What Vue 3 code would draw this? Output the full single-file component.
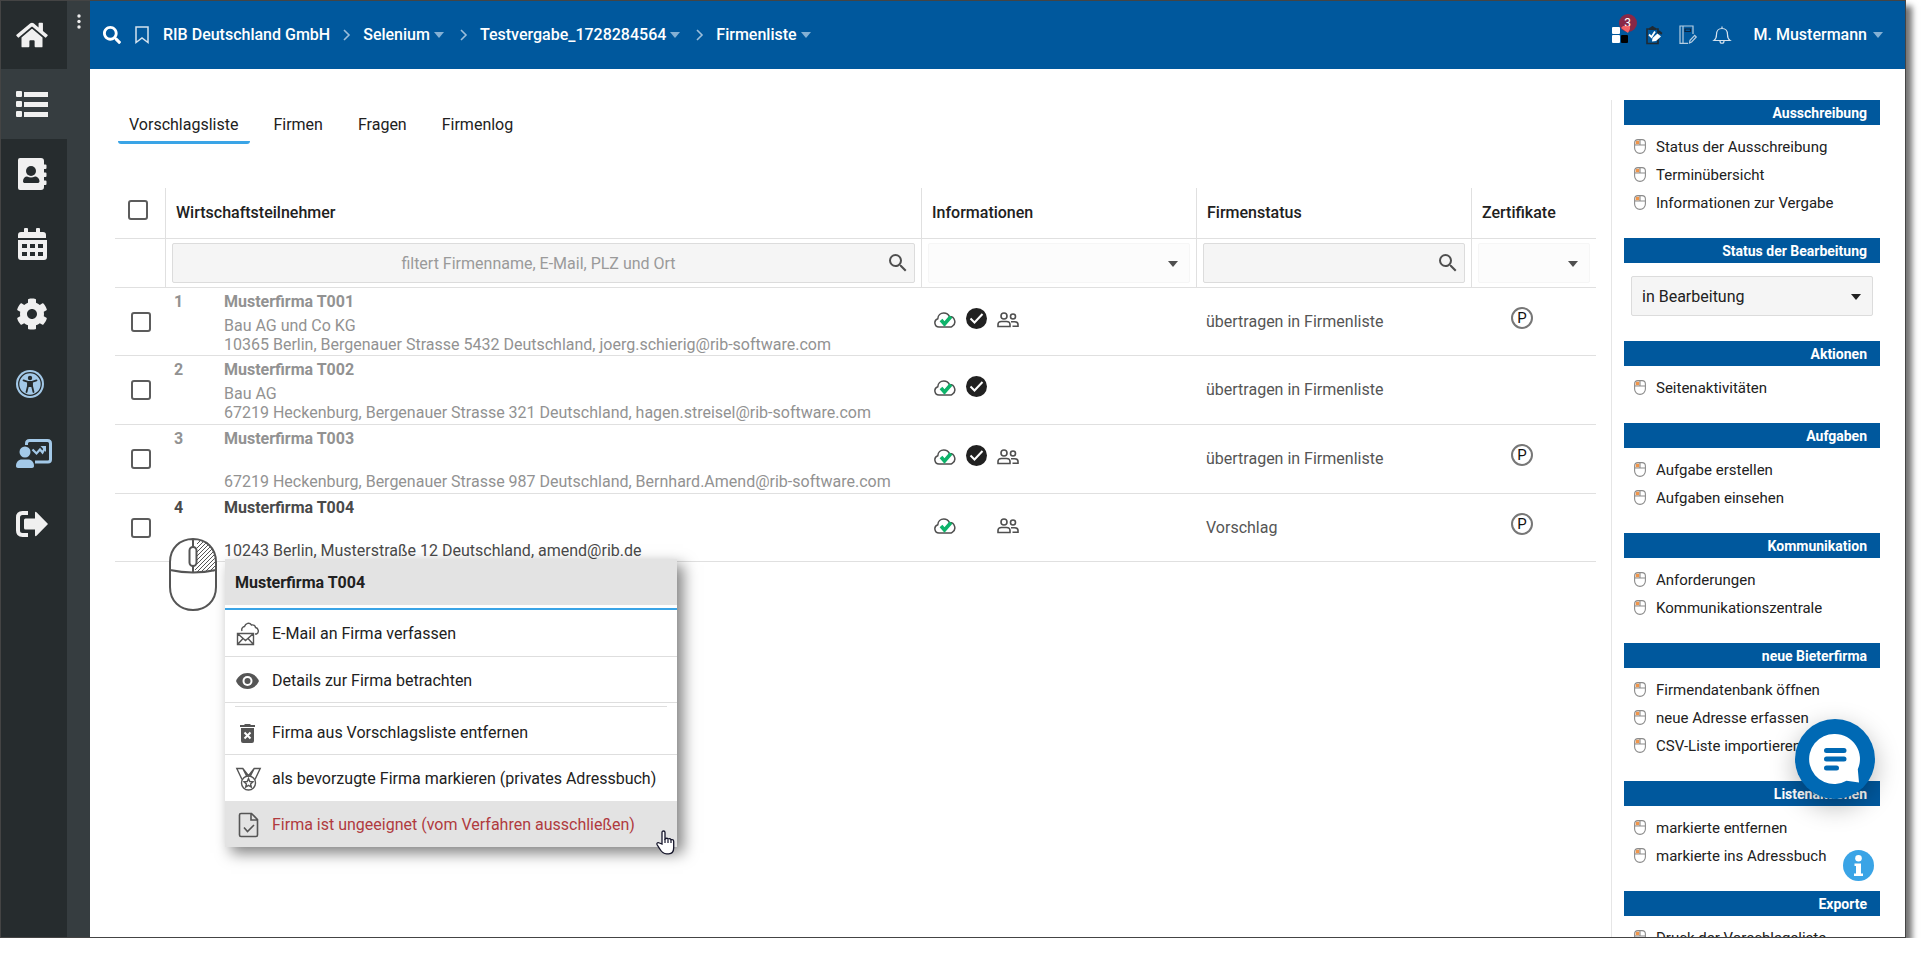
<script setup>
import { ref } from 'vue'

const crumbs = [
  { label: 'RIB Deutschland GmbH', menu: false },
  { label: 'Selenium', menu: true },
  { label: 'Testvergabe_1728284564', menu: true },
  { label: 'Firmenliste', menu: true },
]

const tabs = ['Vorschlagsliste', 'Firmen', 'Fragen', 'Firmenlog']
const activeTab = ref('Vorschlagsliste')

const companies = [
  { nr: 1, name: 'Musterfirma T001', extra: 'Bau AG und Co KG', address: '10365 Berlin, Bergenauer Strasse 5432 Deutschland, joerg.schierig@rib-software.com', checked: true, people: true, status: 'übertragen in Firmenliste', cert: true, muted: true },
  { nr: 2, name: 'Musterfirma T002', extra: 'Bau AG', address: '67219 Heckenburg, Bergenauer Strasse 321 Deutschland, hagen.streisel@rib-software.com', checked: true, people: false, status: 'übertragen in Firmenliste', cert: false, muted: true },
  { nr: 3, name: 'Musterfirma T003', extra: '', address: '67219 Heckenburg, Bergenauer Strasse 987 Deutschland, Bernhard.Amend@rib-software.com', checked: true, people: true, status: 'übertragen in Firmenliste', cert: true, muted: true },
  { nr: 4, name: 'Musterfirma T004', extra: '', address: '10243 Berlin, Musterstraße 12 Deutschland, amend@rib.de', checked: false, people: true, status: 'Vorschlag', cert: true, muted: false },
]

const panels = [
  { title: 'Ausschreibung', links: ['Status der Ausschreibung', 'Terminübersicht', 'Informationen zur Vergabe'] },
  { title: 'Status der Bearbeitung', select: true, links: [] },
  { title: 'Aktionen', links: ['Seitenaktivitäten'] },
  { title: 'Aufgaben', links: ['Aufgabe erstellen', 'Aufgaben einsehen'] },
  { title: 'Kommunikation', links: ['Anforderungen', 'Kommunikationszentrale'] },
  { title: 'neue Bieterfirma', links: ['Firmendatenbank öffnen', 'neue Adresse erfassen', 'CSV-Liste importieren'] },
  { title: 'Listenaktionen', links: ['markierte entfernen', 'markierte ins Adressbuch'] },
  { title: 'Exporte', links: ['Druck der Vorschlagsliste'] },
]
</script>

<template>
  <div class="window">
    <svg class="sprite" aria-hidden="true">
      <symbol id="caret" viewBox="0 0 10 6"><path d="M0 0h10L5 6z" fill="currentColor" /></symbol>
      <symbol id="lens" viewBox="0 0 24 24"><path fill="currentColor" d="M15.500 14h-.79l-.28-.27A6.471 6.471 0 0 0 16 9.500 6.500 6.500 0 1 0 9.500 16c1.610 0 3.090-.59 4.230-1.570l.27.28v.79l5 4.990L20.490 19l-4.990-5zm-6 0C7.010 14 5 11.990 5 9.500S7.010 5 9.500 5 14 7.010 14 9.500 11.990 14 9.500 14z" /></symbol>
      <symbol id="click" viewBox="0 0 12 15">
        <path d="M1 6V4a3 3 0 0 1 3-3h2v5z" fill="#fbdcc0" />
        <rect x="2" y="2" width="3" height="3" fill="#f0954a" />
        <path d="M.6 4q0-3.400 3.400-3.400h4q3.400 0 3.400 3.400v5a5.400 5.400 0 0 1-10.800 0zM.6 6h10.800M6 .6V6" stroke="#8b8b8b" stroke-width="1.100" fill="none" />
      </symbol>
      <symbol id="cloud" viewBox="0 0 22 16">
        <path d="M5 15a4.200 4.200 0 0 1-1.200-8.200C4 3.200 6.600 1 9.800 1c2.600 0 4.600 1.300 5.600 3.600a5.200 5.200 0 0 1 2.800 9.700c-.7.500-1.300.7-2.200.7z" fill="none" stroke="#4f4f4f" stroke-width="1.500" />
        <path d="M7 8l3.500 4 6.500-7.500" fill="none" stroke="#0eb36a" stroke-width="3.600" />
      </symbol>
      <symbol id="done" viewBox="0 0 21 21">
        <circle cx="10.500" cy="10.500" r="10.500" fill="#212121" />
        <path d="M4.500 10.500l4 4L16.500 6" fill="none" stroke="#fff" stroke-width="2" />
      </symbol>
      <symbol id="people" viewBox="0 0 22 16">
        <g fill="none" stroke="#4f4f4f" stroke-width="1.600">
          <circle cx="7" cy="4" r="3" />
          <circle cx="16" cy="4.500" r="2.500" />
          <path d="M1 14.500v-2c0-2 1.500-3 3.500-3h5c2 0 3.500 1 3.500 3v2zM14 9.700h3.500c2 0 3.500 1 3.500 2.800v1.700h-5.500" />
        </g>
      </symbol>
    </svg>

    <nav class="sidebar" aria-label="Hauptnavigation">
      <a href="#" aria-label="Startseite">
        <svg width="32" height="28" viewBox="0 0 576 512"><path fill="currentColor" d="M280.370 148.260L96 300.110V464a16 16 0 0 0 16 16l112.060-.29a16 16 0 0 0 15.920-16V368a16 16 0 0 1 16-16h64a16 16 0 0 1 16 16v95.640a16 16 0 0 0 16 16.050L464 480a16 16 0 0 0 16-16V300L295.670 148.260a12.190 12.190 0 0 0-15.300 0zM571.600 251.470L488 182.560V44.050a12 12 0 0 0-12-12h-56a12 12 0 0 0-12 12v72.610L318.470 43a48 48 0 0 0-61 0L4.340 251.470a12 12 0 0 0-1.600 16.900l25.500 31A12 12 0 0 0 45.150 301l235.220-193.740a12.190 12.190 0 0 1 15.300 0L530.900 301a12 12 0 0 0 16.900-1.600l25.500-31a12 12 0 0 0-1.700-16.930z" /></svg>
      </a>
      <a href="#" class="active" aria-label="Listen">
        <svg width="32" height="27" viewBox="0 0 32 27" fill="currentColor"><rect width="6" height="6" rx="1" /><rect y="10" width="6" height="6" rx="1" /><rect y="20" width="6" height="6" rx="1" /><path d="M8 1h24v5H8zM8 11h24v5H8zM8 21h24v5H8z" /></svg>
      </a>
      <a href="#" aria-label="Adressbuch">
        <svg width="32" height="32" viewBox="0 0 32 32"><path fill="currentColor" d="M4 0h21a3 3 0 0 1 3 3v3.500h1.500a1 1 0 0 1 1 1V10a1 1 0 0 1-1 1H28v3.500h1.500a1 1 0 0 1 1 1V18a1 1 0 0 1-1 1H28v3.500h1.500a1 1 0 0 1 1 1V26a1 1 0 0 1-1 1H28v2a3 3 0 0 1-3 3H4a2 2 0 0 1-2-2V2a2 2 0 0 1 2-2z" /><circle cx="15" cy="13" r="5" fill="#262c2e" /><path d="M9 25c-1.300 0-2-.7-2-1.800C7 20.200 9 18.500 11 18.500c3 1.200 5 1.200 8 0 2 0 4.500 1.700 4.500 4.700 0 1.100-.8 1.800-2 1.800z" fill="#262c2e" /></svg>
      </a>
      <a href="#" aria-label="Kalender">
        <svg width="32" height="32" viewBox="0 0 32 32"><path fill="currentColor" d="M2 10V7a3 3 0 0 1 3-3h3V1q0-1 1-1h2q1 0 1 1v3h8V1q0-1 1-1h2q1 0 1 1v3h3a3 3 0 0 1 3 3v3zM2 12h29v17a3 3 0 0 1-3 3H5a3 3 0 0 1-3-3z" /><path fill="#262c2e" d="M6 16h5v4H6zM14 16h5v4h-5zM22 16h5v4h-5zM6 24h5v4H6zM14 24h5v4h-5zM22 24h5v4h-5z" /></svg>
      </a>
      <a href="#" aria-label="Einstellungen">
        <svg width="32" height="32" viewBox="0 0 512 512"><path fill="currentColor" d="M487.400 315.700l-42.600-24.600c4.300-23.200 4.300-47 0-70.200l42.600-24.600c4.900-2.800 7.100-8.600 5.500-14-11.100-35.600-30-67.800-54.700-94.600-3.800-4.100-10-5.100-14.800-2.300L380.800 110c-17.900-15.400-38.500-27.300-60.800-35.100V25.800c0-5.600-3.900-10.500-9.400-11.700-36.700-8.200-74.300-7.800-109.200 0-5.500 1.200-9.400 6.100-9.400 11.700V75c-22.200 7.900-42.800 19.800-60.800 35.100L88.700 85.500c-4.900-2.800-11-1.900-14.800 2.300-24.700 26.700-43.600 58.900-54.700 94.600-1.700 5.400.6 11.200 5.500 14L67.300 221c-4.300 23.200-4.300 47 0 70.200l-42.600 24.600c-4.900 2.800-7.100 8.600-5.500 14 11.100 35.600 30 67.800 54.700 94.600 3.800 4.100 10 5.100 14.800 2.300l42.600-24.600c17.900 15.400 38.500 27.300 60.800 35.100v49.200c0 5.600 3.900 10.500 9.400 11.700 36.700 8.200 74.300 7.800 109.200 0 5.500-1.200 9.400-6.100 9.400-11.700v-49.200c22.200-7.900 42.800-19.800 60.800-35.100l42.600 24.600c4.900 2.800 11 1.900 14.800-2.300 24.700-26.700 43.600-58.900 54.700-94.600 1.500-5.500-.7-11.300-5.600-14.100zM256 336c-44.100 0-80-35.900-80-80s35.900-80 80-80 80 35.900 80 80-35.900 80-80 80z" /></svg>
      </a>
      <a href="#" class="tint" aria-label="Barrierefreiheit">
        <svg width="28" height="28" viewBox="0 0 28 28"><circle cx="14" cy="14" r="14" fill="currentColor" /><circle cx="14" cy="14" r="11.300" fill="none" stroke="#262c2e" stroke-width="1.200" /><circle cx="14" cy="8" r="2.200" fill="#262c2e" /><path d="M7.500 10.300l4.500 1.500v4L10.500 22M20.500 10.300L16 11.800v4l1.500 6.200" fill="none" stroke="#262c2e" stroke-width="1.800" stroke-linecap="round" /><path d="M11.500 11h5v6h-5z" fill="#262c2e" /></svg>
      </a>
      <a href="#" class="tint" aria-label="Schulung">
        <svg width="36" height="30" viewBox="0 0 36 30"><g fill="currentColor"><circle cx="9" cy="13" r="5.500" /><path d="M0 27c0-4 2.500-6.500 6-6.500h6c3.500 0 6 2.500 6 6.500 0 1.200-.8 2-2 2H2c-1.200 0-2-.8-2-2z" /></g><path d="M10.500 6V4.500q0-3 3-3h18q3 0 3 3v16q0 2.500-2.500 2.500H19" fill="none" stroke="currentColor" stroke-width="3" /><path d="M16.500 10.500l4 4 3.500-4 2.500 3L29 9" fill="none" stroke="currentColor" stroke-width="2.200" /><path d="M24.500 7H30v6z" fill="currentColor" /></svg>
      </a>
      <a href="#" aria-label="Abmelden">
        <svg width="32" height="26" viewBox="0 0 32 26"><path d="M12 2H6.500Q2 2 2 6.500v13Q2 24 6.500 24H12" fill="none" stroke="currentColor" stroke-width="4" /><path fill="currentColor" d="M9.500 7.500H19V2q0-2 1.500-.8L32 13 20.500 24.800Q19 26 19 24v-5.500H9.500Q8 18.500 8 17V9q0-1.500 1.500-1.500z" /></svg>
      </a>
    </nav>

    <div class="rail">
      <button type="button" aria-label="Menü"><svg width="4" height="16" viewBox="0 0 4 16" fill="#eee"><circle cx="2" cy="2" r="1.700" /><circle cx="2" cy="7.500" r="1.700" /><circle cx="2" cy="13" r="1.700" /></svg></button>
    </div>

    <div class="content">
      <header class="topbar">
        <button type="button" aria-label="Suchen"><svg width="18" height="18" viewBox="0 0 512 512"><path fill="#fff" d="M505 442.700L405.300 343c-4.500-4.500-10.600-7-17-7H372c27.600-35.300 44-79.700 44-128C416 93.100 322.900 0 208 0S0 93.100 0 208s93.100 208 208 208c48.300 0 92.700-16.400 128-44v16.300c0 6.400 2.500 12.500 7 17l99.700 99.700c9.400 9.400 24.600 9.400 33.900 0l28.300-28.300c9.400-9.400 9.400-24.600.1-34zM208 336c-70.700 0-128-57.200-128-128 0-70.700 57.200-128 128-128 70.700 0 128 57.200 128 128 0 70.700-57.200 128-128 128z" /></svg></button>
        <button type="button" class="bookmark" aria-label="Lesezeichen"><svg width="14" height="18" viewBox="0 0 14 18"><path d="M1 1h12v15.500L7 12l-6 4.500z" fill="none" stroke="#d4e2ee" stroke-width="1.500" /></svg></button>
        <nav class="crumbs" aria-label="Pfad">
          <template v-for="(c, i) in crumbs" :key="c.label">
            <svg v-if="i" class="sep" width="7" height="12" viewBox="0 0 7 12"><path d="M1 1l5 5-5 5" fill="none" stroke="#9cbedb" stroke-width="1.600" /></svg>
            <a href="#">{{ c.label }}<svg v-if="c.menu" class="tri" width="10" height="6"><use href="#caret" /></svg></a>
          </template>
        </nav>
        <div class="tools">
          <button type="button" class="apps" aria-label="Anwendungen">
            <svg width="17" height="16" viewBox="0 0 17 16"><rect width="8" height="7" rx="1" fill="#fff" /><rect y="8" width="8" height="8" rx="1" fill="#fff" /><rect x="9" y="8" width="7" height="8" rx="1" fill="#000" /></svg>
            <span class="badge">3</span>
            <svg class="spark" width="10" height="8" viewBox="0 0 10 8"><path d="M0 3l3-3h6v4L7 8z" fill="#ff6868" /></svg>
          </button>
          <button type="button" aria-label="Aufgaben"><svg width="18" height="20" viewBox="0 0 18 20"><path d="M2 4h11v14.500H2z" fill="none" stroke="#1f2a33" stroke-width="1.600" /><path d="M4 5V3l2-1q1.500-2 3 0l2 1v2z" fill="#1f2a33" /><path d="M4 9.500l2.500 2.500L10 6.500" fill="none" stroke="#fff" stroke-width="1.800" /><path d="M7 16.500l.5-3.500 5-4.500 3.500 3-5 4.500z" fill="#fff" /><path d="M13 7l1.500-1.500L17.500 8l-1.300 1.700z" fill="#1f2a33" /></svg></button>
          <button type="button" aria-label="Notizen"><svg width="18" height="20" viewBox="0 0 18 20" fill="none" stroke="#b5cde1" stroke-width="1.200"><path d="M9 18.400H1V1h13v8M4 1v17M10.500 18l.5-2.600 4.700-5 1.600 1.600-4.700 5z" /><path d="M6 4h5.500v2.500H6z" stroke="#0d2540" /></svg></button>
          <button type="button" aria-label="Benachrichtigungen"><svg width="18" height="18" viewBox="0 0 18 18" fill="none" stroke="#d4e2ee" stroke-width="1.200"><path d="M1 14.500c2-1.500 2.500-3 2.500-6 0-3.500 2-6 5.500-6s5.500 2.500 5.500 6c0 3 .5 4.500 2.500 6zM9 2.500V.5M7 15c0 3 4 3 4 0" /></svg></button>
          <a href="#" class="user">M. Mustermann<svg class="tri" width="10" height="6"><use href="#caret" /></svg></a>
        </div>
      </header>

      <div class="body">
        <main class="main">
          <div class="tabs" role="tablist">
            <button v-for="t in tabs" :key="t" type="button" role="tab" :aria-selected="t === activeTab" :class="{ on: t === activeTab }" @click="activeTab = t">{{ t }}</button>
          </div>

          <table class="grid">
            <colgroup><col class="c-check" /><col /><col class="c-wide" /><col class="c-wide" /><col class="c-cert" /></colgroup>
            <thead>
              <tr class="head">
                <th class="pick"><input type="checkbox" aria-label="Alle auswählen" /></th>
                <th>Wirtschaftsteilnehmer</th>
                <th>Informationen</th>
                <th>Firmenstatus</th>
                <th>Zertifikate</th>
              </tr>
              <tr class="filter">
                <td></td>
                <td><div class="field"><input type="text" aria-label="Wirtschaftsteilnehmer filtern" placeholder="filtert Firmenname, E-Mail, PLZ und Ort" /><svg class="lens" width="24" height="24"><use href="#lens" /></svg></div></td>
                <td><div class="field light"><select aria-label="Informationen filtern"><option></option></select><svg class="down" width="10" height="6"><use href="#caret" /></svg></div></td>
                <td><div class="field"><input type="text" aria-label="Firmenstatus filtern" /><svg class="lens" width="24" height="24"><use href="#lens" /></svg></div></td>
                <td><div class="field light"><select aria-label="Zertifikate filtern"><option></option></select><svg class="down" width="10" height="6"><use href="#caret" /></svg></div></td>
              </tr>
            </thead>
            <tbody>
              <tr v-for="f in companies" :key="f.nr" :class="{ muted: f.muted }">
                <td class="pick row"><input type="checkbox" :aria-label="f.name + ' auswählen'" /></td>
                <td>
                  <div class="firm">
                    <b>{{ f.nr }}</b>
                    <div>
                      <b>{{ f.name }}</b>
                      <p>{{ f.extra }}</p>
                      <p>{{ f.address }}</p>
                    </div>
                  </div>
                </td>
                <td>
                  <div class="infos">
                    <svg class="low" width="22" height="16"><use href="#cloud" /></svg>
                    <svg v-if="f.checked" width="21" height="21"><use href="#done" /></svg>
                    <i v-else></i>
                    <svg v-if="f.people" class="low" width="22" height="16"><use href="#people" /></svg>
                  </div>
                </td>
                <td class="status">{{ f.status }}</td>
                <td class="cert"><span v-if="f.cert">P</span></td>
              </tr>
            </tbody>
          </table>
        </main>

        <aside class="side">
          <section v-for="p in panels" :key="p.title">
            <h2>{{ p.title }}</h2>
            <div v-if="p.select" class="field state">
              <select aria-label="Status der Bearbeitung"><option>in Bearbeitung</option></select>
              <svg class="down" width="10" height="6"><use href="#caret" /></svg>
            </div>
            <ul v-else>
              <li v-for="l in p.links" :key="l"><a href="#"><svg width="12" height="15"><use href="#click" /></svg>{{ l }}</a></li>
            </ul>
          </section>
        </aside>
      </div>
    </div>

    <svg class="rightclick" width="48" height="73" viewBox="0 0 48 73" aria-hidden="true">
      <path d="M1 24C1 10 11 1 24 1s23 9 23 23v25c0 14-10 23-23 23S1 63 1 49z" fill="#fff" />
      <clipPath id="right-key"><path d="M28 2c11 1 18 10 18 21v10q-9 2-20 2v-6h2z" /></clipPath>
      <path clip-path="url(#right-key)" stroke="#555" stroke-width="1" d="M10 20L35-5M10 24L39-5M10 28L43-5M10 32L47-5M10 36L50-4M13 37L50 0M17 37L50 4M21 37L50 8M25 37L50 12M29 37L50 16M33 37L50 20M37 37L50 24M41 37L50 28" />
      <path d="M1 24C1 10 11 1 24 1s23 9 23 23v25c0 14-10 23-23 23S1 63 1 49zM1 32q23 5 46 0M24 1v34" fill="none" stroke="#555" stroke-width="2" />
      <rect x="20.500" y="9" width="7" height="19" rx="3.500" fill="#fff" stroke="#555" stroke-width="2" />
    </svg>

    <div class="menu" role="menu">
      <h3>Musterfirma T004</h3>
      <button type="button" role="menuitem">
        <svg width="24" height="24" viewBox="0 0 24 24" fill="none" stroke="#555" stroke-width="1.400"><path d="M1.500 11.500h16v11h-16zM1.500 11.500l8 7 8-7M1.500 22.500l5.500-6M17.500 22.500l-5.500-6M6 9C5 6.500 7 4.500 8.500 4.500 9.500 1 13.500 0 15.500 3c2-.5 4 .5 4 2.500 3 .5 4 5 1 6.500h-1.500" /></svg>
        E-Mail an Firma verfassen
      </button>
      <button type="button" role="menuitem">
        <svg width="24" height="24" viewBox="0 0 24 24"><path fill="#555" d="M11.500 4C6 4 2 7.500 0 12c2 4.500 6 8 11.500 8S21 16.500 23 12c-2-4.500-6-8-11.500-8z" /><circle cx="11.500" cy="12" r="5" fill="#fff" /><circle cx="11.500" cy="12" r="3" fill="#555" /></svg>
        Details zur Firma betrachten
      </button>
      <hr />
      <button type="button" role="menuitem">
        <svg width="24" height="24" viewBox="0 0 24 24"><path fill="#555" d="M4 4h4l1-1h5l1 1h4v2H4zM5 7h13v13q0 2-2 2H7q-2 0-2-2z" /><path d="M8.500 11.500l6 6M14.500 11.500l-6 6" stroke="#fff" stroke-width="2" /></svg>
        Firma aus Vorschlagsliste entfernen
      </button>
      <button type="button" role="menuitem" class="plain">
        <svg width="26" height="24" viewBox="0 0 26 24" fill="none" stroke="#555" stroke-width="1.400"><circle cx="12.500" cy="16" r="7" /><path d="M6 12.500L.8 1.500h6l5.700 7.300L18.200 1.500h6L19 12.500M6.800 1.500l4 7.700M18.200 1.500l-4 7.700" /><path d="M12.500 11.500l1.300 3 3.200.3-2.400 2.100.7 3.100-2.800-1.700-2.800 1.700.7-3.100L8 14.800l3.200-.3z" /></svg>
        als bevorzugte Firma markieren (privates Adressbuch)
      </button>
      <button type="button" role="menuitem" class="plain hover">
        <svg width="24" height="26" viewBox="0 0 24 26" fill="none" stroke="#555" stroke-width="1.600"><path d="M5 1.500h10.500l6 6V23q0 1.500-1.500 1.500H5Q3.500 24.500 3.500 23V3Q3.500 1.500 5 1.500zM15 1.500V8h6.500M8 15.500l3.500 4L18 13" /></svg>
        Firma ist ungeeignet (vom Verfahren ausschließen)
      </button>
      <svg class="hand" width="19" height="25" viewBox="0 0 19 25" aria-hidden="true"><path d="M6 14V2.500Q6 1 7.500 1T9 2.500V9q2-1.500 3 0 2-1 3 .7 2.500-.7 2.700 1.800v6c0 4-2 6.300-5 6.300h-2c-3.500 0-5.500-2.300-7-5L1 14.500c-.5-1.500 1-2.500 2.500-1.500z" fill="#fff" stroke="#15152a" stroke-width="1.300" /><path d="M9 9v4M12 9.500V13M15 10v3" stroke="#15152a" stroke-width="1.200" /></svg>
    </div>

    <button type="button" class="chat" aria-label="Chat öffnen">
      <svg width="50" height="50" viewBox="0 0 50 50"><path fill="#fff" d="M25 0a25 25 0 0 1 22.800 35.200L49 48.500l-12.500-1.800A25 25 0 1 1 25 0z" /><path d="M16.500 16.500h17.500M16.500 25h17.500M16.500 34h10" stroke="#0069b4" stroke-width="5" stroke-linecap="round" /></svg>
    </button>
    <button type="button" class="info" aria-label="Information">
      <svg width="31" height="31" viewBox="0 0 31 31"><circle cx="15.500" cy="15.500" r="15.500" fill="#3aa4e6" /><circle cx="15.500" cy="8.300" r="3.300" fill="#fff" /><path fill="#fff" d="M11.500 13.500H18v10h2V26h-9v-2.500h2V16h-1.500z" /></svg>
    </button>
  </div>
</template>

<style>
body { background: #fff; overflow: hidden; }
</style>

<style scoped>
* { box-sizing: border-box; }
.window {
  position: relative;
  display: flex;
  height: calc(100vh - 15px);
  margin-right: 15px;
  border: 1px solid #444;
  background: #fff;
  box-shadow: 6px 6px 6px rgba(0, 0, 0, .55);
  color: #212121;
  font: 16px/20px Roboto, "Liberation Sans", sans-serif;
}
.sprite { position: absolute; width: 0; height: 0; }
svg { display: block; flex: none; overflow: visible; }
button { padding: 0; border: 0; background: none; font: inherit; color: inherit; cursor: pointer; }
a { color: inherit; text-decoration: none; }

.sidebar { width: 66px; flex: none; background: #262c2e; color: #f0f0f0; }
.sidebar a { display: flex; align-items: center; height: 70px; padding-left: 15px; }
.sidebar a:first-child { height: 68px; }
.sidebar .active { background: #363d40; }
.sidebar .tint { color: #a3c9e8; }
.rail { width: 23px; flex: none; padding: 13px 0 0 10px; background: #363d40; }

.content { flex: 1; min-width: 0; display: flex; flex-direction: column; }
.topbar { display: flex; align-items: center; height: 68px; flex: none; padding: 0 22px 0 13px; background: #00589d; color: #fff; font-weight: 500; }
.bookmark { margin: 0 14px; }
.crumbs { display: flex; align-items: center; gap: 13px; }
.crumbs a, .user { display: flex; align-items: center; gap: 4px; }
.crumbs .tri { margin-right: 3px; }
.tri { color: #84b0d4; }
.tools { display: flex; align-items: center; gap: 16px; margin-left: auto; }
.apps { position: relative; }
.badge { position: absolute; left: 7px; top: -13px; width: 18px; height: 18px; border-radius: 50%; background: #8f2845; font: 12px/18px Roboto, sans-serif; text-align: center; }
.spark { position: absolute; left: 9px; top: -2px; z-index: 0; clip-path: inset(1px 0 0 0); }
.badge { z-index: 1; background: rgba(160, 32, 56, .85); }
.spark { z-index: 2; opacity: .9; }
.tools .user { margin-left: 7px; gap: 6px; }

.body { flex: 1; min-height: 0; display: flex; padding-top: 31px; overflow: hidden; }
.main { flex: 1; min-width: 0; padding: 0 15px 0 25px; }
.tabs { display: flex; gap: 12px; padding: 3px 0 0 3px; }
.tabs button { height: 41px; padding: 5px 12px 0 11px; border-bottom: 3px solid transparent; border-radius: 3px; }
.tabs .on { border-color: #3aa4e6; }

.grid { width: 100%; margin-top: 44px; table-layout: fixed; border-collapse: separate; border-spacing: 0; }
.c-check { width: 51px; }
.c-wide { width: 275px; }
.c-cert { width: 124px; }
th, td { padding: 0; border-bottom: 1px solid #e0e0e0; text-align: left; }
.head th { height: 51px; padding: 0 10px; font-weight: 500; }
thead th:not(:last-child), thead td:not(:last-child) { border-right: 1px solid #e0e0e0; }
.filter td { height: 49px; padding: 0 6px; }
.grid .pick { padding: 0 0 6px 13px; }
.grid .pick.row { padding: 0 0 0 16px; }
.pick input { display: block; appearance: none; width: 20px; height: 20px; margin: 0; border: 2px solid #5c5c5c; border-radius: 3px; background: #fff; }
.field { position: relative; height: 40px; }
.field input, .field select { display: block; width: 100%; height: 40px; margin: 0; padding: 1px 20px 0 10px; border: 1px solid #dcdcdc; border-radius: 2px; background: #f5f5f5; color: #212121; font: inherit; appearance: none; }
.field input { text-align: center; }
.field input::placeholder { color: #9a9a9a; opacity: 1; }
.field.light select { border-color: #f6f6f6; background: #fcfcfc; }
.lens, .down { position: absolute; pointer-events: none; color: #4f4f4f; }
.lens { right: 5px; top: 8px; }
.down { right: 12px; top: 18px; }

tbody td { height: 69px; color: #555; }
tbody tr:first-child td, tbody tr:last-child td { height: 68px; }
.firm { display: flex; height: 66px; padding: 3px 0 0 8px; color: #4a4a4a; }
.firm > b { width: 50px; flex: none; }
.firm b { display: block; font-weight: 700; }
.firm p { height: 19px; margin: 0; line-height: 19px; white-space: nowrap; }
.firm div > b { margin-bottom: 4px; }
.muted .firm { color: #929292; }
.infos { display: flex; gap: 10px; padding: 0 0 7px 12px; }
.infos i { width: 21px; height: 21px; }
.low { margin-top: 4px; }
.grid .status { padding: 0 9px; }
.cert span { display: block; width: 22px; height: 22px; margin: 0 0 8px 39px; border: 2px solid #777; border-radius: 50%; color: #111; font-size: 15px; line-height: 18px; text-align: center; }

.side { width: 294px; flex: none; padding: 0 25px 0 12px; border-left: 1px solid #e6e6e6; }
.side h2 { height: 25px; margin: 0; padding-right: 13px; background: #00589d; color: #fff; font-size: 14px; line-height: 26px; font-weight: 700; text-align: right; }
.side ul { margin: 0; padding: 8px 10px 21px; list-style: none; }
.side li a { display: flex; align-items: center; gap: 10px; height: 28px; font-size: 15px; }
.side li svg { margin-bottom: 2px; }
.state { margin: 13px 7px 0; height: 65px; }
.state .down { color: #212121; }

.rightclick { position: absolute; left: 168px; top: 537px; }
.menu { position: absolute; left: 224px; top: 558px; min-width: 452px; background: #fff; box-shadow: 6px 6px 14px rgba(0, 0, 0, .5); }
.menu h3 { margin: 0 0 3px; padding: 14px 10px 12px; background: #e3e3e3; font-size: 16px; line-height: 20px; font-weight: 700; }
.menu h3 + button { height: 49px; border-top: 2px solid #3aa4e6; }
.menu button { display: grid; grid-template-columns: 26px 1fr; gap: 10px; align-items: center; width: 100%; height: 46px; padding: 2px 11px 0; border-bottom: 1px solid #dedede; white-space: nowrap; text-align: left; }
.menu button.plain { border-bottom: 0; }
.menu .hover { background: #e3e3e3; color: #b03a3e; }
.menu hr { height: 1px; margin: 3px 10px 2px; border: 0; background: #dedede; }
.hand { position: absolute; right: 2px; bottom: -8px; }

.chat { position: absolute; right: 30px; bottom: 138px; display: grid; place-items: center; width: 80px; height: 80px; border-radius: 50%; background: #0069b4; box-shadow: 0 8px 26px rgba(0, 0, 0, .28); }
.info { position: absolute; right: 31px; bottom: 56px; }
</style>
